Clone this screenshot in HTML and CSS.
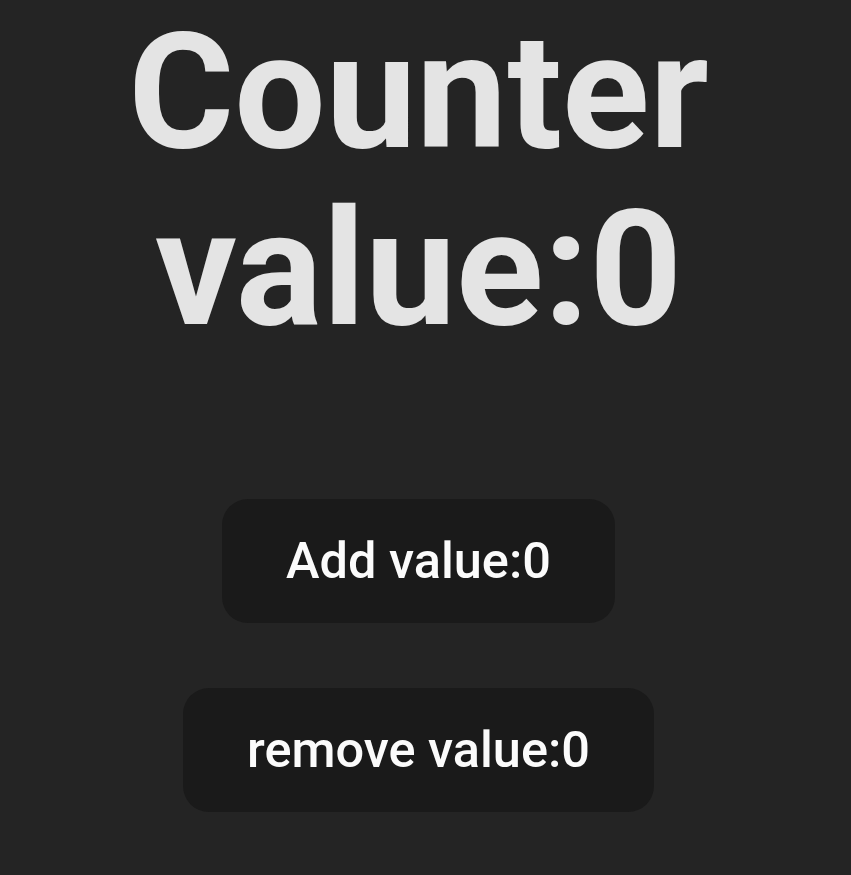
FILE: index.html
```html
<!DOCTYPE html>
<html lang="en">
<head>
<meta charset="utf-8">
<title>Counter</title>
<link rel="stylesheet" href="styles.css">
</head>
<body>
<main class="app">
  <h1 class="title">Counter value:0</h1>
  <div class="actions">
    <button class="btn" type="button">Add value:0</button>
    <button class="btn" type="button">remove value:0</button>
  </div>
</main>
</body>
</html>
```

FILE: styles.css
```css
html, body {
  margin: 0;
  padding: 0;
  background: #242424;
}
body {
  min-height: 875px;
  font-family: Roboto, "Noto Sans", sans-serif;
}
.app {
  display: flex;
  flex-direction: column;
  align-items: center;
  padding: 4px 14px 0 0;
  text-align: center;
}
.title {
  margin: 0;
  width: 640px;
  font-size: 162px;
  line-height: 177px;
  font-weight: 700;
  color: #e4e4e4;
}
.actions {
  display: flex;
  flex-direction: column;
  align-items: center;
  gap: 65px;
  margin-top: 141px;
}
.btn {
  font-family: Roboto, "Noto Sans", sans-serif;
  font-size: 50.5px;
  line-height: 60px;
  font-weight: 500;
  color: #fbfbfb;
  background: #1a1a1a;
  border: none;
  border-radius: 26px;
  padding: 32px 64px;
  cursor: pointer;
}
```
